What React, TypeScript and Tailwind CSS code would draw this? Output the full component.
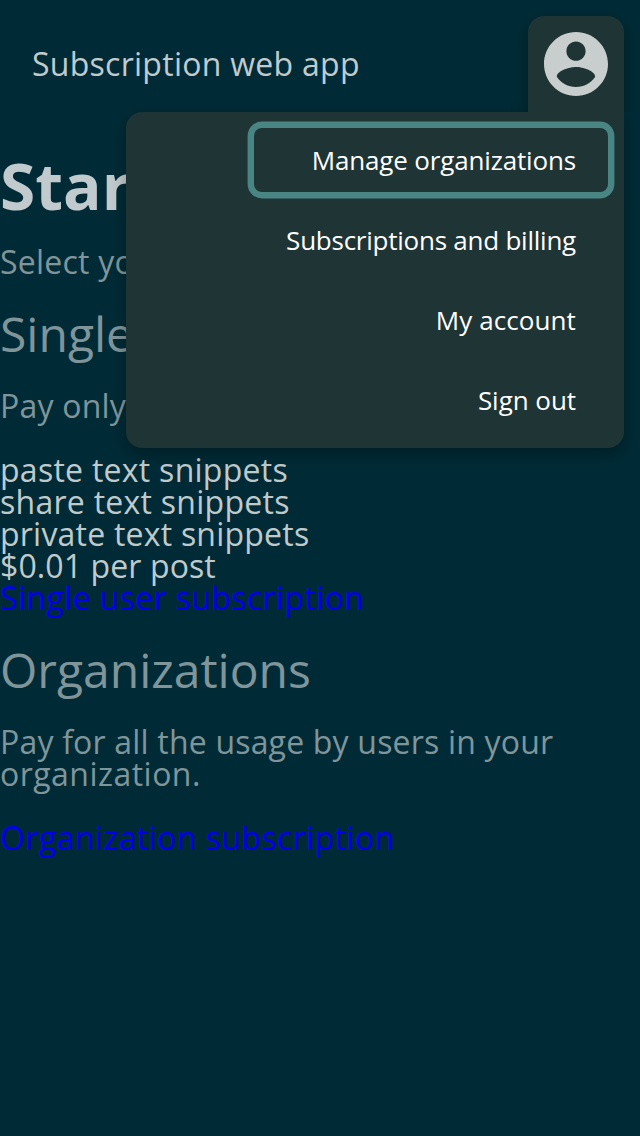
function AccountIcon() {
  return (
    <svg viewBox="2 2 20 20" className="block size-16" fill="currentColor">
      <path d="M12 2C6.48 2 2 6.48 2 12s4.48 10 10 10 10-4.48 10-10S17.52 2 12 2zm0 3c1.66 0 3 1.34 3 3s-1.34 3-3 3-3-1.34-3-3 1.34-3 3-3zm0 14.2c-2.5 0-4.71-1.28-6-3.22.03-1.99 4-3.08 6-3.08 1.99 0 5.97 1.09 6 3.08-1.29 1.94-3.5 3.22-6 3.22z" />
    </svg>
  );
}

function AccountMenu() {
  return (
    <nav className="absolute right-4 top-28 flex h-[336px] w-[498px] flex-col items-end gap-4 rounded-2xl rounded-tr-none bg-[#1f3434] p-4 text-[26px] text-white shadow-[0_6px_16px_rgba(0,0,0,0.3)]">
      <a className="flex h-16 w-[354px] items-center justify-end rounded-lg pr-8 tracking-[-0.16px] shadow-[0_0_0_6.4px_#488583]">Manage organizations</a>
      <a className="flex h-16 items-center pr-8 tracking-[-0.24px]">Subscriptions and billing</a>
      <a className="flex h-16 items-center pr-8 tracking-[0.1px]">My account</a>
      <a className="flex h-16 items-center pr-8 tracking-[-0.05px]">Sign out</a>
    </nav>
  );
}

export default function App() {
  return (
    <div className="relative h-[1136px] w-[640px] overflow-hidden bg-[#002b36] font-['Open_Sans',sans-serif] text-[32px] leading-8 tracking-[0.22px] text-[#80959a]">
      <header className="flex h-32 items-start justify-between pl-8 pr-4 pt-4 text-[#c1cacd]">
        <span className="pt-8 tracking-[0.27px]">Subscription web app</span>
        <button aria-label="Account" className="relative z-10 h-24 rounded-t-2xl bg-[#1f3434] p-4 text-[#c8cece] shadow-[0_6px_16px_rgba(0,0,0,0.3)] [clip-path:inset(-24px_-24px_0_-24px)]">
          <AccountIcon />
        </button>
      </header>
      <main>
        <h1 className="mt-[26px] text-[64px] font-bold leading-[64px] tracking-normal text-[#c1cacd]">Start</h1>
        <p className="mt-7">Select your subscription</p>
        <h2 className="mt-8 text-[48px] leading-[48px] tracking-normal">Single user</h2>
        <p className="mt-8">Pay only for your usage.</p>
        <ul className="mt-8 text-[#c1cacb]">
          <li className="tracking-[0.27px]">paste text snippets</li>
          <li className="tracking-[0.27px]">share text snippets</li>
          <li>private text snippets</li>
          <li className="tracking-[0.11px]">$0.01 per post</li>
        </ul>
        <a className="block tracking-[0.36px] text-[#0000ee]">Single user subscription</a>
        <h2 className="mt-8 text-[48px] leading-[48px] tracking-normal">Organizations</h2>
        <p className="mt-8 tracking-[0.19px]">
          Pay for all the usage by users in your <span className="tracking-[0.47px]">organization.</span>
        </p>
        <a className="mt-8 block tracking-[0.4px] text-[#0000ee]">Organization subscription</a>
      </main>
      <AccountMenu />
    </div>
  );
}
